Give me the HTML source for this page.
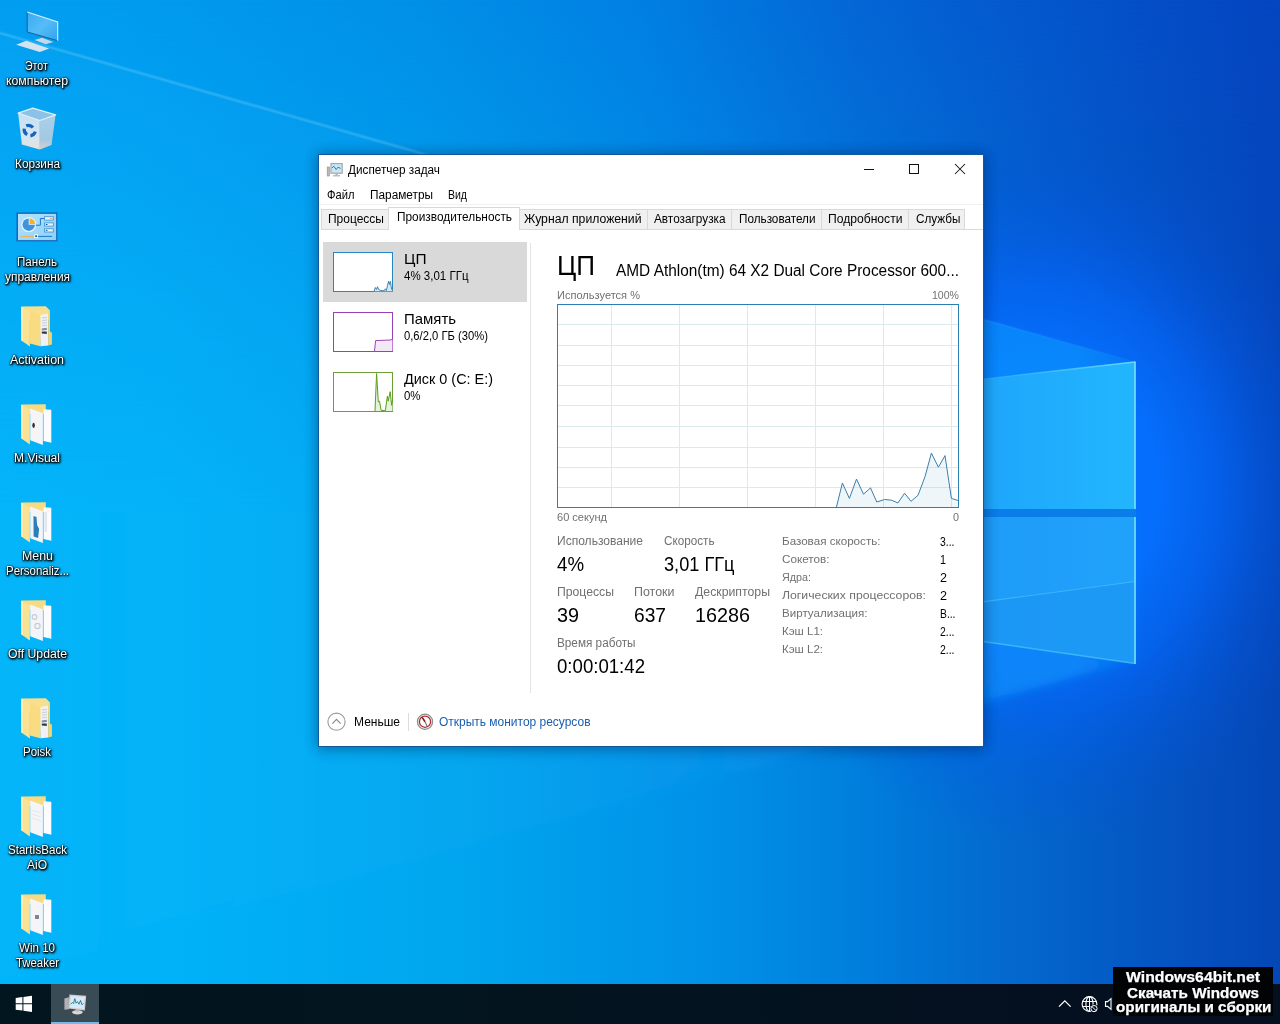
<!DOCTYPE html>
<html lang="ru"><head><meta charset="utf-8"><title>Диспетчер задач</title>
<style>
html,body{margin:0;padding:0;width:1280px;height:1024px;overflow:hidden;background:#0a6fdc;font-family:"Liberation Sans",sans-serif;}
body{position:relative;}
.abs{position:absolute;}
#txt .t{position:absolute;white-space:pre;line-height:1;transform-origin:0 50%;font-family:"Liberation Sans",sans-serif;}
#wall{position:absolute;left:0;top:0;width:1280px;height:1024px;}
.ico{position:absolute;}
#win{position:absolute;left:318px;top:154px;width:664px;height:591px;background:#fff;border:1px solid #12599a;box-shadow:0 0 12px rgba(0,20,60,.3),0 3px 14px rgba(0,20,60,.2);}
.tab{position:absolute;top:56px;height:19px;background:#f0f0f0;border:1px solid #d9d9d9;border-bottom:none;box-sizing:border-box;}
.tab.sel{top:53px;height:23px;background:#fff;z-index:2;}
#taskbar{position:absolute;left:0;top:984px;width:1280px;height:40px;background:linear-gradient(90deg,#02161f 0%,#03151f 35%,#04111f 70%,#040f20 100%);}
</style></head>
<body>
<svg id="wall" width="1280" height="1024" viewBox="0 0 1280 1024">
<defs>
<linearGradient id="bgt" x1="0" y1="0" x2="1280" y2="0" gradientUnits="userSpaceOnUse">
<stop offset="0" stop-color="#009ef1"/><stop offset=".09" stop-color="#009cf0"/><stop offset=".325" stop-color="#0090e8"/><stop offset=".5" stop-color="#0180e3"/><stop offset=".664" stop-color="#0467d6"/><stop offset=".89" stop-color="#044fc8"/><stop offset="1" stop-color="#0445c0"/>
</linearGradient>
<linearGradient id="bgb" x1="0" y1="0" x2="1280" y2="0" gradientUnits="userSpaceOnUse">
<stop offset="0" stop-color="#00b4f9"/><stop offset=".13" stop-color="#00b2f8"/><stop offset=".36" stop-color="#00a6ee"/><stop offset=".547" stop-color="#0092e8"/><stop offset=".664" stop-color="#0080de"/><stop offset=".78" stop-color="#036ad0"/><stop offset=".9" stop-color="#0456c2"/><stop offset="1" stop-color="#0447b7"/>
</linearGradient>
<linearGradient id="vm" x1="0" y1="0" x2="0" y2="1024" gradientUnits="userSpaceOnUse">
<stop offset="0" stop-color="#fff" stop-opacity="0"/><stop offset=".29" stop-color="#fff" stop-opacity=".62"/><stop offset=".5" stop-color="#fff" stop-opacity="1"/><stop offset="1" stop-color="#fff" stop-opacity="1"/>
</linearGradient>
<mask id="mb"><rect width="1280" height="1024" fill="url(#vm)"/></mask>
<radialGradient id="glow" cx="1040" cy="490" r="310" gradientUnits="userSpaceOnUse" gradientTransform="translate(0 490) scale(1 1.14) translate(0 -490)">
<stop offset="0" stop-color="#0570ff" stop-opacity="1"/><stop offset=".38" stop-color="#0570ff" stop-opacity=".95"/><stop offset=".58" stop-color="#0566fa" stop-opacity=".7"/><stop offset=".74" stop-color="#055cf2" stop-opacity=".36"/><stop offset=".9" stop-color="#0452e4" stop-opacity=".12"/><stop offset="1" stop-color="#0450d8" stop-opacity="0"/>
</radialGradient>
<linearGradient id="pane" x1="983" y1="0" x2="1135" y2="0" gradientUnits="userSpaceOnUse">
<stop offset="0" stop-color="#1fa6fb"/><stop offset="1" stop-color="#22b6fe"/>
</linearGradient>
<linearGradient id="pane2" x1="983" y1="0" x2="1135" y2="0" gradientUnits="userSpaceOnUse">
<stop offset="0" stop-color="#1e9cf8"/><stop offset="1" stop-color="#21a2fa"/>
</linearGradient>
<linearGradient id="cone" x1="0" y1="0" x2="1135" y2="0" gradientUnits="userSpaceOnUse">
<stop offset="0" stop-color="#3cc0ff" stop-opacity=".05"/><stop offset=".62" stop-color="#22a4ff" stop-opacity=".10"/><stop offset=".82" stop-color="#0a96ff" stop-opacity=".55"/><stop offset=".95" stop-color="#0a8cfa" stop-opacity=".8"/><stop offset="1" stop-color="#0880f4" stop-opacity=".5"/>
</linearGradient>
<linearGradient id="edge" x1="0" y1="0" x2="1135" y2="0" gradientUnits="userSpaceOnUse">
<stop offset="0" stop-color="#8fdcff" stop-opacity=".22"/><stop offset=".5" stop-color="#8fdcff" stop-opacity=".2"/><stop offset=".85" stop-color="#8fdcff" stop-opacity=".05"/><stop offset="1" stop-color="#8fdcff" stop-opacity="0"/>
</linearGradient>
<linearGradient id="pedge" x1="983" y1="0" x2="1135" y2="0" gradientUnits="userSpaceOnUse">
<stop offset="0" stop-color="#66d6fc" stop-opacity=".1"/><stop offset="1" stop-color="#66d6fc" stop-opacity="1"/>
</linearGradient>
<clipPath id="cu"><rect x="0" y="0" width="1280" height="512"/></clipPath>
<clipPath id="cl"><rect x="0" y="512" width="1280" height="512"/></clipPath>
<filter id="fblur" x="-5%" y="-5%" width="110%" height="110%"><feGaussianBlur stdDeviation="5"/></filter>
</defs>
<rect width="1280" height="1024" fill="url(#bgt)"/>
<rect width="1280" height="1024" fill="url(#bgb)" mask="url(#mb)"/>
<rect width="1280" height="1024" fill="url(#glow)"/>
<!-- light cones (full width, subtle at left) -->
<g clip-path="url(#cu)"><polygon points="1135,361.5 984,319.3 410,150 0,33 0,976 1135,663" fill="url(#cone)"/></g>
<g clip-path="url(#cl)"><polygon points="1135,362 -40,26 -40,990 1135,660" fill="url(#cone)" filter="url(#fblur)"/></g>
<polyline points="0,33 410,150 984,319.3 1135,361.5" fill="none" stroke="url(#edge)" stroke-width="3.6" opacity=".7"/><polyline points="0,33 410,150 984,319.3 1135,361.5" fill="none" stroke="url(#edge)" stroke-width="1.4" opacity=".7"/>
<!-- panes -->
<polygon points="1135,362 640,417 640,509 1135,509" fill="url(#pane)"/>
<polygon points="1135,517 640,517 640,592 1135,663.5" fill="url(#pane2)"/>
<polygon points="1135,581.5 640,648 640,592 1135,663.5" fill="#1a92f2" opacity=".55"/>
<line x1="640" y1="648" x2="1135" y2="581.5" stroke="#56c8fc" stroke-width="1.2" opacity=".55"/>
<rect x="640" y="509" width="496" height="8" fill="#0a7de8"/>
<!-- bright edges -->
<line x1="983" y1="379" x2="1135" y2="362" stroke="url(#pedge)" stroke-width="1.4"/>
<line x1="1135" y1="361.5" x2="1135" y2="509" stroke="#6adafc" stroke-width="1.8"/>
<line x1="1135" y1="517" x2="1135" y2="664" stroke="#6adafc" stroke-width="1.8"/>
<line x1="983" y1="641.5" x2="1135" y2="663.5" stroke="#4cc4fb" stroke-width="1.6" opacity=".7"/>
</svg>
<div id="icons">
<svg class="ico" style="left:7px;top:5px" width="60" height="60" viewBox="0 0 60 60">
<defs><linearGradient id="scr" x1="0" y1="0" x2="1" y2="1"><stop offset="0" stop-color="#37aaf2"/><stop offset=".5" stop-color="#55bcf7"/><stop offset="1" stop-color="#2ea4ef"/></linearGradient></defs>
<polygon points="27.5,35.1 35.1,32.8 46.3,36.9 38.7,39.3" fill="#c6d8e6"/>
<polygon points="9.1,39.8 19.3,35.7 42.2,43.4 32.8,46.9" fill="#d3e3ef"/>
<polygon points="20.2,7 50.7,17 50.7,35.7 20.2,27" fill="url(#scr)"/>
<polyline points="20.2,7 20.2,27 50.7,35.7" fill="none" stroke="#185f9c" stroke-width="1"/>
<polyline points="20.2,7 50.7,17 50.7,35.7" fill="none" stroke="#d6ecfa" stroke-width="1.1"/>
</svg>
<svg class="ico" style="left:7px;top:100px" width="60" height="60" viewBox="0 0 60 60">
<defs><linearGradient id="bl" x1="0" y1="0" x2="0" y2="1"><stop offset="0" stop-color="#c4e0f3"/><stop offset=".7" stop-color="#d6e6f0"/><stop offset="1" stop-color="#eadfd8"/></linearGradient>
<linearGradient id="br" x1="0" y1="0" x2="0" y2="1"><stop offset="0" stop-color="#a9d0ea"/><stop offset=".7" stop-color="#a3c8e2"/><stop offset="1" stop-color="#d6d2d2"/></linearGradient></defs>
<polygon points="11.1,13.2 32.8,20.5 32.8,49.5 14.9,44.5" fill="url(#bl)"/>
<polygon points="32.8,20.5 48.6,14.9 44.5,45.1 32.8,49.5" fill="url(#br)"/>
<polygon points="11.1,13.2 25.8,8.2 48.6,14.9 32.8,20.5" fill="#8cc2e6" stroke="#dff0fa" stroke-width="1.3" stroke-linejoin="round"/>
<g fill="none" stroke="#1565c0" stroke-width="3.2"><path d="M19.2,25.8 A6,6 0 0 1 26,27.6"/><path d="M20.2,34.6 A6,6 0 0 1 17.2,28.6"/><path d="M28.3,31.6 A6,6 0 0 1 23.4,35.8"/></g>
</svg>
<svg class="ico" style="left:7px;top:198px" width="60" height="60" viewBox="0 0 60 60">
<defs><linearGradient id="cpg" x1="0" y1="0" x2="1" y2="1"><stop offset="0" stop-color="#b4e2fc"/><stop offset="1" stop-color="#8fd0f8"/></linearGradient></defs>
<rect x="9.4" y="14.4" width="41" height="29" fill="#0f6cbd"/>
<rect x="11" y="15.9" width="38.1" height="26.2" fill="url(#cpg)"/>
<circle cx="21.7" cy="26.7" r="7.4" fill="#e9f6fe"/>
<circle cx="21.7" cy="26.7" r="6.2" fill="#3f92dc"/>
<path d="M21.7,26.7 L21.7,19.3 A7.4,7.4 0 0 1 29.1,26.7 Z" fill="#e9f6fe"/>
<path d="M22.5,25.9 L22.5,20.3 A6,6 0 0 1 28.2,25.9 Z" fill="#f5b324"/>
<polyline points="28.7,27.2 33.4,27.2 33.4,20.5 37.5,20.5" fill="none" stroke="#1b78c8" stroke-width="1"/>
<g fill="#e8f5fd" stroke="#3a8fd6" stroke-width=".8"><rect x="37.5" y="18.7" width="8.8" height="3.4"/><rect x="37.5" y="24.9" width="8.8" height="3.2"/><rect x="37.5" y="30.8" width="8.8" height="3.2"/></g>
<line x1="43" y1="20.4" x2="45.3" y2="20.4" stroke="#e09a3a" stroke-width=".9"/>
<line x1="38.8" y1="26.5" x2="40.5" y2="26.5" stroke="#1b4f8a" stroke-width="1"/><line x1="38.8" y1="32.4" x2="40.5" y2="32.4" stroke="#1b4f8a" stroke-width="1"/>
<line x1="13.5" y1="38.4" x2="27" y2="38.4" stroke="#e8b860" stroke-width="1.3"/>
<line x1="31" y1="38.4" x2="45.1" y2="38.4" stroke="#1b78c8" stroke-width="1"/>
<rect x="27.2" y="36.3" width="3.8" height="3.8" fill="#f4fbff"/><rect x="28.2" y="37.3" width="1.8" height="1.8" fill="#23598f"/>
</svg>
<svg class="ico" style="left:10px;top:296px" width="60" height="60" viewBox="0 0 60 60">
<polygon points="11.4,10.6 35.8,10.3 40,14.6 40,24 11.4,24" fill="#f8df8e"/>
<polygon points="11.4,10.8 19.9,15.2 19.9,50.4 11.4,44.5" fill="#fae294"/>
<polygon points="11.4,10.8 12.6,11.4 12.6,45.3 11.4,44.5" fill="#fdf3c4"/>
<polygon points="19.9,14.8 31.5,19 30.5,50.3 19.9,47.6" fill="#f9db82"/>
<polygon points="30.5,18.9 38.2,17.6 38.2,49.4 30.5,50.3" fill="#f1f1f4"/>
<g stroke="#c3c8d2" stroke-width=".9"><line x1="32" y1="22" x2="37" y2="21.4"/><line x1="32" y1="24.6" x2="37" y2="24"/><line x1="32" y1="27.2" x2="37" y2="26.6"/><line x1="32" y1="29.8" x2="37" y2="29.2"/></g>
<polygon points="31.8,32.4 36.8,31.8 36.8,34 31.8,34.6" fill="#7e8ea6"/><polygon points="31.8,35.4 36.8,35.6 36.8,38 31.8,37.4" fill="#333a46"/>
<polygon points="38.2,14.6 40,14.6 40,35.6 41.9,36.8 41.9,48.4 38.2,49.4" fill="#f4d474"/>
</svg>
<svg class="ico" style="left:10px;top:394px" width="60" height="60" viewBox="0 0 60 60">
<polygon points="11.4,10.6 35.8,10.3 35.8,20 11.4,20" fill="#f6da84"/>
<polygon points="11.4,10.8 19.9,15.2 19.9,50.4 11.4,44.5" fill="#fae294"/>
<polygon points="11.4,10.8 12.6,11.4 12.6,45.3 11.4,44.5" fill="#fdf3c4"/>
<polygon points="20.2,14.6 32.9,19.3 32.9,51 20.2,46.3" fill="#f5f5f8"/>
<polygon points="33.5,15.2 41.3,15.8 41.3,48.7 33.5,46.9" fill="#fcfcfe"/>
<ellipse cx="23.6" cy="31.3" rx="1.3" ry="2.6" fill="#33363d"/>
</svg>
<svg class="ico" style="left:10px;top:492px" width="60" height="60" viewBox="0 0 60 60">
<polygon points="11.4,10.6 35.8,10.3 35.8,20 11.4,20" fill="#f6da84"/>
<polygon points="11.4,10.8 19.9,15.2 19.9,50.4 11.4,44.5" fill="#fae294"/>
<polygon points="11.4,10.8 12.6,11.4 12.6,45.3 11.4,44.5" fill="#fdf3c4"/>
<polygon points="20.2,14.6 32.9,19.3 32.9,51 20.2,46.3" fill="#f5f5f8"/>
<polygon points="33.5,15.2 41.3,15.8 41.3,48.7 33.5,46.9" fill="#fcfcfe"/>
<path d="M23.5,24 l3,1 l0.6,8 l2,4 l-1,9 l-4.5,-1.6 z" fill="#2a7fb8"/><rect x="34.5" y="20" width="2.5" height="20" fill="#dfe6ee"/>
</svg>
<svg class="ico" style="left:10px;top:590px" width="60" height="60" viewBox="0 0 60 60">
<polygon points="11.4,10.6 35.8,10.3 35.8,20 11.4,20" fill="#f6da84"/>
<polygon points="11.4,10.8 19.9,15.2 19.9,50.4 11.4,44.5" fill="#fae294"/>
<polygon points="11.4,10.8 12.6,11.4 12.6,45.3 11.4,44.5" fill="#fdf3c4"/>
<polygon points="20.2,14.6 32.9,19.3 32.9,51 20.2,46.3" fill="#f5f5f8"/>
<polygon points="33.5,15.2 41.3,15.8 41.3,48.7 33.5,46.9" fill="#fcfcfe"/>
<circle cx="24.5" cy="27" r="2.3" fill="none" stroke="#c9cdd6" stroke-width="1.2"/><circle cx="27.5" cy="36" r="2.6" fill="none" stroke="#c9cdd6" stroke-width="1.2"/>
</svg>
<svg class="ico" style="left:10px;top:688px" width="60" height="60" viewBox="0 0 60 60">
<polygon points="11.4,10.6 35.8,10.3 40,14.6 40,24 11.4,24" fill="#f8df8e"/>
<polygon points="11.4,10.8 19.9,15.2 19.9,50.4 11.4,44.5" fill="#fae294"/>
<polygon points="11.4,10.8 12.6,11.4 12.6,45.3 11.4,44.5" fill="#fdf3c4"/>
<polygon points="19.9,14.8 31.5,19 30.5,50.3 19.9,47.6" fill="#f9db82"/>
<polygon points="30.5,18.9 38.2,17.6 38.2,49.4 30.5,50.3" fill="#f1f1f4"/>
<g stroke="#c3c8d2" stroke-width=".9"><line x1="32" y1="22" x2="37" y2="21.4"/><line x1="32" y1="24.6" x2="37" y2="24"/><line x1="32" y1="27.2" x2="37" y2="26.6"/><line x1="32" y1="29.8" x2="37" y2="29.2"/></g>
<polygon points="31.8,32.4 36.8,31.8 36.8,34 31.8,34.6" fill="#7e8ea6"/><polygon points="31.8,35.4 36.8,35.6 36.8,38 31.8,37.4" fill="#333a46"/>
<polygon points="38.2,14.6 40,14.6 40,35.6 41.9,36.8 41.9,48.4 38.2,49.4" fill="#f4d474"/>
</svg>
<svg class="ico" style="left:10px;top:786px" width="60" height="60" viewBox="0 0 60 60">
<polygon points="11.4,10.6 35.8,10.3 35.8,20 11.4,20" fill="#f6da84"/>
<polygon points="11.4,10.8 19.9,15.2 19.9,50.4 11.4,44.5" fill="#fae294"/>
<polygon points="11.4,10.8 12.6,11.4 12.6,45.3 11.4,44.5" fill="#fdf3c4"/>
<polygon points="20.2,14.6 32.9,19.3 32.9,51 20.2,46.3" fill="#f5f5f8"/>
<polygon points="33.5,15.2 41.3,15.8 41.3,48.7 33.5,46.9" fill="#fcfcfe"/>
<g stroke="#dfe3ea" stroke-width=".8"><line x1="22" y1="24" x2="31" y2="27"/><line x1="22" y1="28" x2="31" y2="31"/><line x1="22" y1="32" x2="31" y2="35"/></g>
</svg>
<svg class="ico" style="left:10px;top:884px" width="60" height="60" viewBox="0 0 60 60">
<polygon points="11.4,10.6 35.8,10.3 35.8,20 11.4,20" fill="#f6da84"/>
<polygon points="11.4,10.8 19.9,15.2 19.9,50.4 11.4,44.5" fill="#fae294"/>
<polygon points="11.4,10.8 12.6,11.4 12.6,45.3 11.4,44.5" fill="#fdf3c4"/>
<polygon points="20.2,14.6 32.9,19.3 32.9,51 20.2,46.3" fill="#f5f5f8"/>
<polygon points="33.5,15.2 41.3,15.8 41.3,48.7 33.5,46.9" fill="#fcfcfe"/>
<rect x="25" y="31" width="4" height="4" fill="#7b8796"/>
</svg>
</div>
<div id="win">
<svg class="abs" style="left:7px;top:6px" width="18" height="18" viewBox="0 0 18 18">
<rect x="1.2" y="6" width="2.2" height="9" fill="#b9b9b9" stroke="#8e8e8e" stroke-width=".6"/>
<rect x="5" y="2.6" width="11.2" height="9.6" fill="#c9e6f7" stroke="#a8a8a8" stroke-width="1.2"/>
<polyline points="6,7 7.8,5.2 10.2,8.6 12,6.2 14.6,7.4" fill="none" stroke="#2a6ea6" stroke-width=".9"/>
<rect x="9.4" y="12.6" width="2.2" height="1.8" fill="#b0b0b0"/><rect x="7" y="14.2" width="7" height="1.2" fill="#b0b0b0"/>
</svg>
<div class="abs" style="left:545px;top:14px;width:10px;height:1px;background:#111"></div>
<div class="abs" style="left:590px;top:9px;width:8px;height:8px;border:1px solid #111;box-sizing:content-box"></div>
<svg class="abs" style="left:635px;top:8px" width="12" height="12" viewBox="0 0 12 12"><path d="M1,1 L11,11 M11,1 L1,11" stroke="#111" stroke-width="1.05" fill="none"/></svg>
<div class="abs" style="left:0;top:49px;width:664px;height:1px;background:#f0f0f0"></div>
<div class="abs" style="left:2px;top:74px;width:662px;height:1px;background:#d9d9d9"></div>
<div class="abs" style="left:3px;top:54px;width:67px;height:20px;background:#f0f0f0;border:1px solid #d9d9d9;border-bottom:none;border-left:none;box-sizing:border-box"></div>
<div class="abs" style="left:69px;top:52px;width:132px;height:23px;background:#fff;border:1px solid #d9d9d9;border-bottom:none;box-sizing:border-box"></div>
<div class="abs" style="left:201px;top:54px;width:128px;height:20px;background:#f0f0f0;border:1px solid #d9d9d9;border-bottom:none;border-left:none;box-sizing:border-box"></div>
<div class="abs" style="left:329px;top:54px;width:84px;height:20px;background:#f0f0f0;border:1px solid #d9d9d9;border-bottom:none;border-left:none;box-sizing:border-box"></div>
<div class="abs" style="left:413px;top:54px;width:90px;height:20px;background:#f0f0f0;border:1px solid #d9d9d9;border-bottom:none;border-left:none;box-sizing:border-box"></div>
<div class="abs" style="left:503px;top:54px;width:87px;height:20px;background:#f0f0f0;border:1px solid #d9d9d9;border-bottom:none;border-left:none;box-sizing:border-box"></div>
<div class="abs" style="left:590px;top:54px;width:56px;height:20px;background:#f0f0f0;border:1px solid #d9d9d9;border-bottom:none;border-left:none;box-sizing:border-box"></div>
<div class="abs" style="left:2px;top:54px;width:1px;height:20px;background:#d9d9d9"></div>
<div class="abs" style="left:4px;top:87px;width:203.5px;height:59.5px;background:#d9d9d9"></div>
<div class="abs" style="left:211px;top:88px;width:1px;height:450px;background:#e3e3e3"></div>
<svg class="abs" style="left:14px;top:97px" width="61" height="161" viewBox="0 0 61 161">
<rect x=".5" y=".5" width="59" height="39" fill="#fff" stroke="#2686bf"/>
<polygon points="41.1,39.3 42.3,35.5 43.5,37.5 44.5,34.7 45.6,37.5 47.8,38.5 51.1,38.8 52.3,36.8 53.4,38.5 54.4,33.8 55.6,29.2 56.4,32.5 57.4,29.4 58.6,37.5 59.4,38.1 59.4,39.3" fill="#d9eaf3"/><polyline points="41.1,39.3 42.3,35.5 43.5,37.5 44.5,34.7 45.6,37.5 47.8,38.5 51.1,38.8 52.3,36.8 53.4,38.5 54.4,33.8 55.6,29.2 56.4,32.5 57.4,29.4 58.6,37.5 59.4,38.1" fill="none" stroke="#2b7ba8" stroke-width=".9"/>
<rect x=".5" y="60.5" width="59" height="39" fill="#fff" stroke="#9a3fb4"/>
<polygon points="41.5,99.0 42.6,88.6 57.2,88.0 59.4,87.4 59.4,99.0" fill="#f4e7f7"/><polyline points="41.5,99.0 42.6,88.6 57.2,88.0 59.4,87.4" fill="none" stroke="#9135ab" stroke-width=".9"/>
<rect x=".5" y="120.5" width="59" height="39" fill="#fff" stroke="#6b9e36"/>
<polygon points="42.0,159.0 43.6,121.5 45.3,150.0 46.5,149.2 48.1,158.3 52.3,158.8 54.4,144.2 55.2,149.2 57.2,139.7 58.6,153.3 59.4,148.4 59.4,159.0" fill="#e7f2db"/><polyline points="42.0,159.0 43.6,121.5 45.3,150.0 46.5,149.2 48.1,158.3 52.3,158.8 54.4,144.2 55.2,149.2 57.2,139.7 58.6,153.3 59.4,148.4" fill="none" stroke="#58a01c" stroke-width="1"/>
</svg>
<svg class="abs" style="left:238px;top:149px" width="402" height="204" viewBox="0 0 402 204">
<rect x="0" y="0" width="402" height="204" fill="#fff"/>
<g stroke="#dde9f1" stroke-width="1"><line x1="54.5" y1="1" x2="54.5" y2="203"/><line x1="122.5" y1="1" x2="122.5" y2="203"/><line x1="190.5" y1="1" x2="190.5" y2="203"/><line x1="258.5" y1="1" x2="258.5" y2="203"/><line x1="326.5" y1="1" x2="326.5" y2="203"/><line x1="394.5" y1="1" x2="394.5" y2="203"/><line x1="1" y1="20.5" x2="401" y2="20.5"/><line x1="1" y1="41.5" x2="401" y2="41.5"/><line x1="1" y1="61.5" x2="401" y2="61.5"/><line x1="1" y1="81.5" x2="401" y2="81.5"/><line x1="1" y1="101.5" x2="401" y2="101.5"/><line x1="1" y1="122.5" x2="401" y2="122.5"/><line x1="1" y1="143.5" x2="401" y2="143.5"/><line x1="1" y1="163.5" x2="401" y2="163.5"/><line x1="1" y1="183.5" x2="401" y2="183.5"/></g>
<polygon points="279.4,203.2 285.4,179.0 292.4,194.4 299.5,175.1 306.5,190.2 313.5,183.9 319.8,198.0 327.6,195.5 334.6,196.2 340.9,199.0 347.6,189.2 354.0,197.3 361.0,191.3 368.0,172.7 374.4,149.1 381.4,163.2 388.0,151.6 394.4,194.4 401.4,196.6 401.4,203.6 279.4,203.6" fill="#117dbb" fill-opacity=".07"/>
<polyline points="279.4,203.2 285.4,179.0 292.4,194.4 299.5,175.1 306.5,190.2 313.5,183.9 319.8,198.0 327.6,195.5 334.6,196.2 340.9,199.0 347.6,189.2 354.0,197.3 361.0,191.3 368.0,172.7 374.4,149.1 381.4,163.2 388.0,151.6 394.4,194.4 401.4,196.6" fill="none" stroke="#3a80a8" stroke-width="1" stroke-linejoin="round"/>
<rect x=".5" y=".5" width="401" height="203" fill="none" stroke="#2a80b0" stroke-width="1"/>
</svg>
<svg class="abs" style="left:7px;top:556px" width="22" height="22" viewBox="0 0 22 22"><circle cx="10.5" cy="10.7" r="8.6" fill="#fff" stroke="#9a9a9a" stroke-width="1.1"/><polyline points="6.4,12.6 10.5,8.4 14.6,12.6" fill="none" stroke="#8a8a8a" stroke-width="1.2"/></svg>
<div class="abs" style="left:89px;top:558px;width:1px;height:18px;background:#dcdcdc"></div>
<svg class="abs" style="left:96px;top:557px" width="20" height="20" viewBox="0 0 20 20"><circle cx="10" cy="9.7" r="7.6" fill="#f3f3f3" stroke="#8d8d8d" stroke-width="1.2"/><circle cx="10" cy="9.7" r="5.6" fill="#fff" stroke="#b32a2a" stroke-width="1.3"/><path d="M10,9.7 L7.2,5.4" stroke="#7a1d1d" stroke-width="1.6"/><path d="M10,9.7 L12,14" stroke="#555" stroke-width="1"/></svg>
</div>
<div id="taskbar">
<div class="abs" style="left:51px;top:0;width:48px;height:40px;background:#394b54"></div>
<div class="abs" style="left:51px;top:38px;width:48px;height:2px;background:#76b9ed"></div>
<svg class="abs" style="left:15px;top:11px" width="18" height="18" viewBox="0 0 18 18"><polygon points="0.7,3 7.4,2 7.4,8.3 0.7,8.3" fill="#fff"/><polygon points="8.4,1.9 17,0.7 17,8.3 8.4,8.3" fill="#fff"/><polygon points="0.7,9.3 7.4,9.3 7.4,15.6 0.7,14.7" fill="#fff"/><polygon points="8.4,9.3 17,9.3 17,17 8.4,15.8" fill="#fff"/></svg>
<svg class="abs" style="left:62px;top:6px" width="28" height="28" viewBox="62 990 28 28">
<polygon points="64.4,998.6 68.9,997.2 68.9,1009.3 64.4,1009.7" fill="#c9c3c6" opacity=".85"/>
<ellipse cx="77.4" cy="1012.3" rx="5.4" ry="2.2" fill="#dcd5d5"/>
<polygon points="75.8,1009 79,1009.4 78.8,1011.6 75.8,1011.4" fill="#bdb7b8"/>
<polygon points="69.4,994.4 86.2,995.8 84.9,1010.4 68.5,1008.6" fill="#d3ccce"/>
<polygon points="70.6,995.9 84.8,997.1 83.8,1008.9 69.9,1007.4" fill="#d4ecf7"/>
<polyline points="70.6,1004.2 72.4,1002.6 73.5,1003.6 74.8,998.6 76.1,1003.2 77.5,1001.6 79,1004.2 80.5,1000.4 82,1004.8 83.4,1003.4" fill="none" stroke="#2d6f8f" stroke-width=".9"/>
</svg>
<!-- tray -->
<svg class="abs" style="left:1056px;top:10px" width="62" height="22" viewBox="0 0 62 22">
<polyline points="3,12.6 8.8,6.8 14.6,12.6" fill="none" stroke="#fff" stroke-width="1.3"/>
<g fill="none" stroke="#fff" stroke-width="1.1"><circle cx="33.5" cy="10" r="7.4"/><ellipse cx="33.5" cy="10" rx="3.6" ry="7.4"/><line x1="33.5" y1="2.6" x2="33.5" y2="17.4" stroke-width="1"/><line x1="26.6" y1="7.5" x2="40.4" y2="7.5" stroke-width="1"/><line x1="26.6" y1="12.5" x2="40.4" y2="12.5" stroke-width="1"/></g>
<circle cx="38" cy="14.6" r="4" fill="#04101f"/><circle cx="38" cy="14.6" r="3.1" fill="none" stroke="#fff" stroke-width="1"/><line x1="35.9" y1="12.5" x2="40.1" y2="16.7" stroke="#fff" stroke-width="1"/>
<path d="M49.5,7.6 h2.1 l3.4,-2.9 v10.6 l-3.4,-2.9 h-2.1 z" fill="none" stroke="#fff" stroke-width="1.1"/>
</svg>
</div>
<div class="abs" style="left:1113px;top:967px;width:160px;height:49px;background:#020305"></div>
<div id="txt">
<span class="t" style="left:348.0px;top:163.84px;font-size:12px;color:#000;transform:scaleX(0.9800);">Диспетчер задач</span>
<span class="t" style="left:327.0px;top:188.84px;font-size:12px;color:#000;transform:scaleX(0.9317);">Файл</span>
<span class="t" style="left:369.5px;top:188.84px;font-size:12px;color:#000;transform:scaleX(0.9849);">Параметры</span>
<span class="t" style="left:447.5px;top:188.84px;font-size:12px;color:#000;transform:scaleX(0.8748);">Вид</span>
<span class="t" style="left:327.5px;top:213.34px;font-size:12px;color:#000;transform:scaleX(0.9997);">Процессы</span>
<span class="t" style="left:396.5px;top:211.34px;font-size:12px;color:#000;transform:scaleX(0.9873);">Производительность</span>
<span class="t" style="left:524.0px;top:213.34px;font-size:12px;color:#000;transform:scaleX(1.0181);">Журнал приложений</span>
<span class="t" style="left:654.0px;top:213.34px;font-size:12px;color:#000;transform:scaleX(0.9822);">Автозагрузка</span>
<span class="t" style="left:738.5px;top:213.34px;font-size:12px;color:#000;transform:scaleX(0.9767);">Пользователи</span>
<span class="t" style="left:828.0px;top:213.34px;font-size:12px;color:#000;transform:scaleX(1.0100);">Подробности</span>
<span class="t" style="left:915.5px;top:213.34px;font-size:12px;color:#000;transform:scaleX(0.9787);">Службы</span>
<span class="t" style="left:403.5px;top:251.30px;font-size:15px;color:#000;transform:scaleX(1.0278);">ЦП</span>
<span class="t" style="left:403.5px;top:269.84px;font-size:12px;color:#000;transform:scaleX(0.9591);">4% 3,01 ГГц</span>
<span class="t" style="left:403.5px;top:311.30px;font-size:15px;color:#000;transform:scaleX(0.9952);">Память</span>
<span class="t" style="left:403.5px;top:329.84px;font-size:12px;color:#000;transform:scaleX(0.9359);">0,6/2,0 ГБ (30%)</span>
<span class="t" style="left:403.5px;top:371.30px;font-size:15px;color:#000;transform:scaleX(0.9610);">Диск 0 (C: E:)</span>
<span class="t" style="left:403.5px;top:389.84px;font-size:12px;color:#000;transform:scaleX(0.9514);">0%</span>
<span class="t" style="left:557.0px;top:252.30px;font-size:28px;color:#000;transform:scaleX(0.9304);">ЦП</span>
<span class="t" style="left:616.0px;top:262.96px;font-size:16px;color:#000;transform:scaleX(0.9619);">AMD Athlon(tm) 64 X2 Dual Core Processor 600...</span>
<span class="t" style="left:557.0px;top:289.69px;font-size:11px;color:#707070;transform:scaleX(1.0042);">Используется %</span>
<span class="t" style="left:932.0px;top:289.69px;font-size:11px;color:#707070;transform:scaleX(0.9595);">100%</span>
<span class="t" style="left:557.0px;top:511.69px;font-size:11px;color:#707070;transform:scaleX(1.0031);">60 секунд</span>
<span class="t" style="left:953.0px;top:511.69px;font-size:11px;color:#707070;transform:scaleX(0.9796);">0</span>
<span class="t" style="left:557.0px;top:535.34px;font-size:12px;color:#707070;transform:scaleX(1.0029);">Использование</span>
<span class="t" style="left:557.0px;top:554.07px;font-size:20px;color:#000;transform:scaleX(0.9341);">4%</span>
<span class="t" style="left:664.0px;top:535.34px;font-size:12px;color:#707070;transform:scaleX(0.9744);">Скорость</span>
<span class="t" style="left:664.0px;top:554.07px;font-size:20px;color:#000;transform:scaleX(0.9084);">3,01 ГГц</span>
<span class="t" style="left:557.0px;top:586.34px;font-size:12px;color:#707070;transform:scaleX(1.0176);">Процессы</span>
<span class="t" style="left:557.0px;top:605.07px;font-size:20px;color:#000;transform:scaleX(0.9888);">39</span>
<span class="t" style="left:634.0px;top:586.34px;font-size:12px;color:#707070;transform:scaleX(1.0376);">Потоки</span>
<span class="t" style="left:634.0px;top:605.07px;font-size:20px;color:#000;transform:scaleX(0.9588);">637</span>
<span class="t" style="left:695.0px;top:586.34px;font-size:12px;color:#707070;transform:scaleX(1.0237);">Дескрипторы</span>
<span class="t" style="left:695.0px;top:605.07px;font-size:20px;color:#000;transform:scaleX(0.9888);">16286</span>
<span class="t" style="left:557.0px;top:637.34px;font-size:12px;color:#707070;transform:scaleX(0.9790);">Время работы</span>
<span class="t" style="left:557.0px;top:656.07px;font-size:20px;color:#000;transform:scaleX(0.9309);">0:00:01:42</span>
<span class="t" style="left:782.0px;top:535.97px;font-size:11.5px;color:#707070;transform:scaleX(1.0107);">Базовая скорость:</span>
<span class="t" style="left:940.0px;top:535.54px;font-size:12px;color:#000;transform:scaleX(0.8689);">3...</span>
<span class="t" style="left:782.0px;top:553.97px;font-size:11.5px;color:#707070;transform:scaleX(1.0167);">Сокетов:</span>
<span class="t" style="left:940.0px;top:553.54px;font-size:12px;color:#000;transform:scaleX(0.8972);">1</span>
<span class="t" style="left:782.0px;top:571.97px;font-size:11.5px;color:#707070;transform:scaleX(0.9350);">Ядра:</span>
<span class="t" style="left:940.0px;top:571.54px;font-size:12px;color:#000;transform:scaleX(1.0467);">2</span>
<span class="t" style="left:782.0px;top:589.97px;font-size:11.5px;color:#707070;transform:scaleX(1.0659);">Логических процессоров:</span>
<span class="t" style="left:940.0px;top:589.54px;font-size:12px;color:#000;transform:scaleX(1.0467);">2</span>
<span class="t" style="left:782.0px;top:607.97px;font-size:11.5px;color:#707070;transform:scaleX(1.0072);">Виртуализация:</span>
<span class="t" style="left:940.0px;top:607.54px;font-size:12px;color:#000;transform:scaleX(0.8604);">В...</span>
<span class="t" style="left:782.0px;top:625.97px;font-size:11.5px;color:#707070;transform:scaleX(1.0004);">Кэш L1:</span>
<span class="t" style="left:940.0px;top:625.54px;font-size:12px;color:#000;transform:scaleX(0.8689);">2...</span>
<span class="t" style="left:782.0px;top:643.97px;font-size:11.5px;color:#707070;transform:scaleX(1.0004);">Кэш L2:</span>
<span class="t" style="left:940.0px;top:643.54px;font-size:12px;color:#000;transform:scaleX(0.8689);">2...</span>
<span class="t" style="left:354.0px;top:715.84px;font-size:12px;color:#000;transform:scaleX(1.0003);">Меньше</span>
<span class="t" style="left:439.0px;top:715.84px;font-size:12px;color:#1A5EAF;transform:scaleX(0.9978);">Открыть монитор ресурсов</span>
<span class="t" style="left:25.0px;top:60.34px;font-size:12px;color:#fff;transform:scaleX(0.8801);text-shadow:0 0 2px #000,1px 1px 2px #000,1px 1px 3px #000,0 1px 2px #000;">Этот</span>
<span class="t" style="left:6.0px;top:75.34px;font-size:12px;color:#fff;transform:scaleX(1.0245);text-shadow:0 0 2px #000,1px 1px 2px #000,1px 1px 3px #000,0 1px 2px #000;">компьютер</span>
<span class="t" style="left:14.5px;top:158.34px;font-size:12px;color:#fff;transform:scaleX(0.9843);text-shadow:0 0 2px #000,1px 1px 2px #000,1px 1px 3px #000,0 1px 2px #000;">Корзина</span>
<span class="t" style="left:17.0px;top:256.34px;font-size:12px;color:#fff;transform:scaleX(0.9646);text-shadow:0 0 2px #000,1px 1px 2px #000,1px 1px 3px #000,0 1px 2px #000;">Панель</span>
<span class="t" style="left:4.5px;top:271.34px;font-size:12px;color:#fff;transform:scaleX(0.9931);text-shadow:0 0 2px #000,1px 1px 2px #000,1px 1px 3px #000,0 1px 2px #000;">управления</span>
<span class="t" style="left:10.0px;top:354.34px;font-size:12px;color:#fff;transform:scaleX(1.0378);text-shadow:0 0 2px #000,1px 1px 2px #000,1px 1px 3px #000,0 1px 2px #000;">Activation</span>
<span class="t" style="left:14.0px;top:452.34px;font-size:12px;color:#fff;transform:scaleX(1.0044);text-shadow:0 0 2px #000,1px 1px 2px #000,1px 1px 3px #000,0 1px 2px #000;">M.Visual</span>
<span class="t" style="left:21.5px;top:550.34px;font-size:12px;color:#fff;transform:scaleX(1.0323);text-shadow:0 0 2px #000,1px 1px 2px #000,1px 1px 3px #000,0 1px 2px #000;">Menu</span>
<span class="t" style="left:5.5px;top:565.34px;font-size:12px;color:#fff;transform:scaleX(0.9541);text-shadow:0 0 2px #000,1px 1px 2px #000,1px 1px 3px #000,0 1px 2px #000;">Personaliz...</span>
<span class="t" style="left:7.5px;top:648.34px;font-size:12px;color:#fff;transform:scaleX(1.0203);text-shadow:0 0 2px #000,1px 1px 2px #000,1px 1px 3px #000,0 1px 2px #000;">Off Update</span>
<span class="t" style="left:23.0px;top:746.34px;font-size:12px;color:#fff;transform:scaleX(0.9542);text-shadow:0 0 2px #000,1px 1px 2px #000,1px 1px 3px #000,0 1px 2px #000;">Poisk</span>
<span class="t" style="left:7.5px;top:844.34px;font-size:12px;color:#fff;transform:scaleX(0.9615);text-shadow:0 0 2px #000,1px 1px 2px #000,1px 1px 3px #000,0 1px 2px #000;">StartIsBack</span>
<span class="t" style="left:27.0px;top:859.34px;font-size:12px;color:#fff;transform:scaleX(0.9992);text-shadow:0 0 2px #000,1px 1px 2px #000,1px 1px 3px #000,0 1px 2px #000;">AiO</span>
<span class="t" style="left:19.0px;top:942.34px;font-size:12px;color:#fff;transform:scaleX(0.9636);text-shadow:0 0 2px #000,1px 1px 2px #000,1px 1px 3px #000,0 1px 2px #000;">Win 10</span>
<span class="t" style="left:15.5px;top:957.34px;font-size:12px;color:#fff;transform:scaleX(0.9480);text-shadow:0 0 2px #000,1px 1px 2px #000,1px 1px 3px #000,0 1px 2px #000;">Tweaker</span>
<span class="t" style="left:1126.0px;top:970.23px;font-size:14.5px;color:#fff;transform:scaleX(1.0883);font-weight:bold;-webkit-text-stroke:.25px #fff;">Windows64bit.net</span>
<span class="t" style="left:1127.0px;top:986.23px;font-size:14.5px;color:#fff;transform:scaleX(1.0521);font-weight:bold;-webkit-text-stroke:.25px #fff;">Скачать Windows</span>
<span class="t" style="left:1115.5px;top:1000.03px;font-size:14.5px;color:#fff;transform:scaleX(1.0529);font-weight:bold;-webkit-text-stroke:.25px #fff;">оригиналы и сборки</span>
</div>
</body></html>
